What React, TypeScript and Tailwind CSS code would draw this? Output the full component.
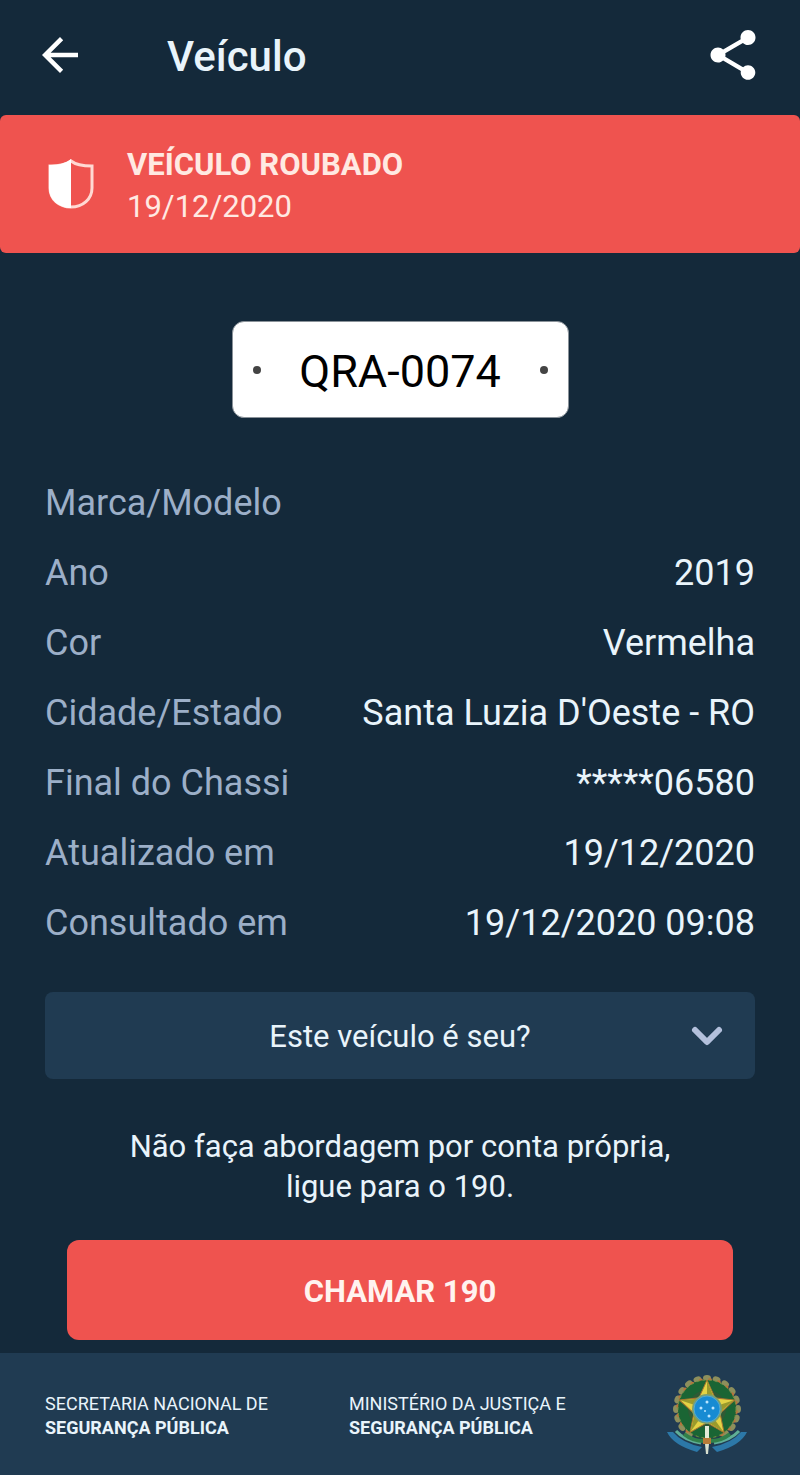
import { ChevronDown } from 'lucide-react'
import { MdArrowBack, MdShare } from 'react-icons/md'

interface Detail {
  label: string
  value: string
}

const details: Detail[] = [
  { label: 'Marca/Modelo', value: '' },
  { label: 'Ano', value: '2019' },
  { label: 'Cor', value: 'Vermelha' },
  { label: 'Cidade/Estado', value: "Santa Luzia D'Oeste - RO" },
  { label: 'Final do Chassi', value: '*****06580' },
  { label: 'Atualizado em', value: '19/12/2020' },
  { label: 'Consultado em', value: '19/12/2020 09:08' },
]

function HalfShield() {
  return (
    <svg viewBox="0 0 48 52" className="h-[52px] w-12 shrink-0" fill="none" aria-hidden="true">
      <path
        d="M24 3C19 7 11 8 3 8v22c0 11 9 19 21 19s21-8 21-19V8C37 8 29 7 24 3Z"
        stroke="#ffd9d3"
        strokeWidth="3"
      />
      <path d="M24 1C18 6 10 7 2 7v23c0 12 10 20 22 20V1Z" fill="#fff" />
    </svg>
  )
}

// leaf tips around the wreath, open at the bottom
const leaves = Array.from({ length: 17 }, (_, i) => 126 + i * 18)
const starArms = [0, 72, 144, 216, 288]

function CoatOfArms() {
  return (
    <svg viewBox="0 1 95 95" className="size-[95px] shrink-0" role="img" aria-label="Brasão da República">
      <circle cx="47" cy="43" r="30" fill="#2f5a35" />
      {leaves.map((angle) => (
        <g key={angle} transform={`rotate(${angle} 47 43)`}>
          <ellipse cx="78" cy="43" rx="3" ry="4" fill="#8d8f5c" />
          <circle cx="76" cy="46" r="2" fill="#b8743c" />
        </g>
      ))}
      <circle cx="47" cy="43" r="24" fill="none" stroke="#1a6534" strokeWidth="10" />
      <circle cx="47" cy="43" r="29" fill="none" stroke="#719044" strokeWidth="1" strokeDasharray="3 3" />
      <path
        d="M7 66q6 13 30 20l5-5Q22 77 13 66ZM87 66q-6 13-30 20l-5-5q20-4 29-15Z"
        fill="#2c78a8"
      />
      <path d="M16 65q8 9 25 12M79 65q-8 9-25 12" fill="none" stroke="#5fae96" strokeWidth="3" />
      <path d="M24 68q10 8 23 7 13 1 23-7" fill="none" stroke="#31804a" strokeWidth="4" />
      {starArms.map((angle) => (
        <g key={angle} transform={`rotate(${angle} 47 43)`}>
          <path d="M47 14 56 34H38Z" fill="#e3d345" stroke="#a8742e" strokeWidth="1" />
          <path d="M47 15v19h8Z" fill="#9a9a2c" />
        </g>
      ))}
      <circle cx="47" cy="43" r="15" fill="#7a9f70" />
      <circle cx="47" cy="43" r="13" fill="#178bd3" stroke="#4fa9d4" strokeWidth="1" />
      <g fill="#b9e5ff">
        <circle cx="47" cy="36" r="1.5" />
        <circle cx="41" cy="42" r="1.5" />
        <circle cx="53" cy="42" r="1.5" />
        <circle cx="49" cy="50" r="1.5" />
        <circle cx="45" cy="45" r="1" />
      </g>
      <path d="M45 60h4v14h-4Z" fill="#e4ead8" />
      <path d="M43 72h8v6h-8Z" fill="#b77b39" />
      <path d="M45 78h4l-1 10h-2Z" fill="#d7dfcf" />
    </svg>
  )
}

export default function App() {
  return (
    <div className="flex min-h-screen flex-col bg-[#14293a] font-[Roboto,sans-serif] text-[#e9f4fb]">
      <header className="flex h-[115px] items-center px-[33px] pb-[6px]">
        <button type="button" aria-label="Voltar" className="text-white">
          <MdArrowBack className="size-[54px]" />
        </button>
        <h1 className="ml-20 flex-1 pt-1 text-[42px] leading-[50px] font-medium">Veículo</h1>
        <button type="button" aria-label="Compartilhar" className="mr-1 text-white">
          <MdShare className="size-[60px]" />
        </button>
      </header>

      <section className="flex h-[138px] items-center gap-8 rounded-md bg-[#ef534f] px-[47px] text-[#ffe9e2]">
        <HalfShield />
        <div className="pt-1 text-[31px] leading-[42px]">
          <h2 className="font-bold">VEÍCULO ROUBADO</h2>
          <p>19/12/2020</p>
        </div>
      </section>

      <main className="flex flex-1 flex-col px-[45px] pt-[68px] pb-[13px]">
        <div className="mx-auto flex h-[97px] w-[337px] items-center justify-between rounded-xl border border-[#8a9299] bg-white px-5 text-black">
          <span className="size-2 rounded-full bg-[#444]" />
          <span className="pt-1 text-[45px] leading-[50px]">QRA-0074</span>
          <span className="size-2 rounded-full bg-[#444]" />
        </div>

        <dl className="mt-[50px]">
          {details.map(({ label, value }) => (
            <div key={label} className="flex h-[70px] items-center justify-between text-[36px] leading-[42px]">
              <dt className="text-[#9cafc8]">{label}</dt>
              <dd>{value}</dd>
            </div>
          ))}
        </dl>

        <button
          type="button"
          className="mt-[34px] grid h-[87px] grid-cols-[48px_1fr_48px] items-center rounded-lg bg-[#203b52] px-6 text-[31px]"
        >
          <span className="col-start-2 pt-1">Este veículo é seu?</span>
          <ChevronDown className="size-12 text-[#b3c0dc]" strokeWidth={3} />
        </button>

        <p className="mt-12 text-center text-[31px] leading-10">
          Não faça abordagem por conta própria,
          <br />
          ligue para o 190.
        </p>

        <button
          type="button"
          className="mx-[22px] mt-[33px] h-[100px] rounded-xl bg-[#ef534f] pt-1 text-[31px] font-bold text-[#fff3ef]"
        >
          CHAMAR 190
        </button>
      </main>

      <footer className="flex h-[122px] items-center bg-[#203b52] px-[45px] text-[18px] leading-6">
        <p className="w-[304px] pt-1">
          SECRETARIA NACIONAL DE
          <br />
          <strong>SEGURANÇA PÚBLICA</strong>
        </p>
        <p className="flex-1 pt-1">
          MINISTÉRIO DA JUSTIÇA E
          <br />
          <strong>SEGURANÇA PÚBLICA</strong>
        </p>
        <CoatOfArms />
      </footer>
    </div>
  )
}
